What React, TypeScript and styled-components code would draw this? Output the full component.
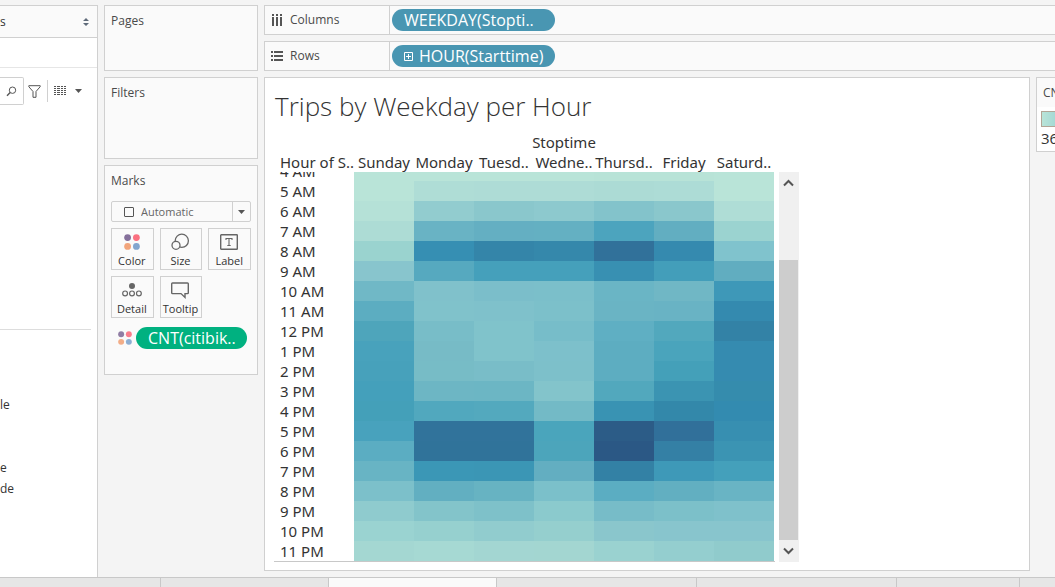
import React from "react";
import styled, { createGlobalStyle } from "styled-components";

const line = "#d0d0d0";
const uiFont = `"Open Sans", "Noto Sans", sans-serif`;
const chartFont = `"Noto Sans", "Open Sans", sans-serif`;

const GlobalStyle = createGlobalStyle`
  *, *::before, *::after { box-sizing: border-box; }
  body {
    margin: 0;
    background: #f4f4f4;
    color: #4a4a4a;
    font: 12px/16px ${uiFont};
  }
  button, input, select { font: inherit; color: inherit; }
`;

const Shell = styled.div`
  display: flex;
  flex-direction: column;
  height: 100vh;
  min-height: 400px;
  overflow: hidden;
`;

const Workspace = styled.main`
  flex: 1;
  min-height: 0;
  display: flex;
  gap: 6px;
  padding-top: 5px;
`;

/* ---- Data pane ---- */

const DataPane = styled.aside`
  flex: 0 0 98px;
  background: #fff;
  border-top: 1px solid ${line};
  border-right: 1px solid ${line};
`;

const SourceButton = styled.button`
  display: flex;
  align-items: center;
  justify-content: space-between;
  width: 100%;
  height: 32px;
  padding: 0 8px 0 0;
  border: 0;
  border-bottom: 1px solid ${line};
  background: #fafafa;
  color: #333;
`;

const SourceList = styled.div`
  height: 30px;
  border-bottom: 1px solid #e6e6e6;
`;

const SearchBar = styled.div`
  display: flex;
  align-items: center;
  height: 46px;
`;

const SearchBox = styled.label`
  display: flex;
  align-items: center;
  width: 24px;
  height: 28px;
  border: 1px solid ${line};
  border-left: 0;
  border-radius: 0 2px 2px 0;
`;

const SearchInput = styled.input`
  width: 6px;
  padding: 0;
  border: 0;
  background: none;
  outline: none;
`;

const IconButton = styled.button<{ $width: number }>`
  display: flex;
  align-items: center;
  justify-content: center;
  width: ${(p) => p.$width}px;
  height: 22px;
  padding: 0;
  border: 0;
  background: none;
`;

const ViewGroup = styled.div`
  display: flex;
  margin-left: 2px;
  border-left: 1px solid ${line};
`;

const Tables = styled.div`
  height: 216px;
  margin-right: 6px;
  border-bottom: 1px solid #ddd;
`;

const FieldList = styled.ul`
  margin: 0;
  padding: 64px 0 0;
  list-style: none;
  color: #333;
`;

const Field = styled.li`
  height: 21px;
  line-height: 21px;
`;

/* ---- Cards ---- */

const CardColumn = styled.div`
  flex: 0 0 154px;
  display: flex;
  flex-direction: column;
  gap: 6px;
`;

const Card = styled.section<{ $height: number }>`
  min-height: ${(p) => p.$height}px;
  padding: 7px 6px;
  border: 1px solid ${line};
  background: #fafafa;
`;

const CardTitle = styled.h2`
  margin: 0;
  font-size: 12px;
  font-weight: 400;
  line-height: 16px;
`;

const MarkType = styled.label`
  display: flex;
  align-items: center;
  height: 21px;
  margin: 12px 0 6px;
  padding-left: 12px;
  border: 1px solid ${line};
  border-radius: 2px;
  color: #666;
`;

const MarkSelect = styled.select`
  flex: 1;
  min-width: 0;
  height: 18px;
  padding: 0 0 0 7px;
  border: 0;
  background: none;
  appearance: none;
  font-size: 11px;
`;

const MarkArrow = styled.span`
  display: flex;
  align-items: center;
  justify-content: center;
  width: 18px;
  height: 19px;
  border-left: 1px solid ${line};
`;

const MarkGrid = styled.div`
  display: grid;
  grid-template-columns: repeat(3, 1fr);
  gap: 6px;
`;

const MarkButton = styled.button`
  display: flex;
  flex-direction: column;
  align-items: center;
  justify-content: space-between;
  height: 42px;
  padding: 3px 1px 0 0;
  border: 1px solid ${line};
  background: #fafafa;
  color: #333;
  font-size: 11px;
  line-height: 16px;
`;

const Encoding = styled.div`
  display: flex;
  align-items: center;
  gap: 4px;
  padding: 9px 4px 0 7px;
`;

const Pill = styled.button<{ $color: string }>`
  display: flex;
  align-items: center;
  gap: 6px;
  height: 22px;
  padding: 0 11px 0 12px;
  border: 0;
  border-radius: 11px;
  background: ${(p) => p.$color};
  color: #fff;
  font: 500 16px/22px ${uiFont};
  white-space: nowrap;
`;

const EncodingPill = styled(Pill)`
  flex: 1;
`;

const ShelfPill = styled(Pill)`
  width: 163px;
`;

/* ---- Shelves and sheet ---- */

const Canvas = styled.div`
  flex: 1;
  min-width: 0;
  display: flex;
  flex-direction: column;
  gap: 6px;
`;

const Shelf = styled.section`
  flex: none;
  display: flex;
  align-items: center;
  height: 30px;
  border: 1px solid ${line};
  border-right: 0;
  background: #fafafa;
`;

const ShelfLabel = styled.h2`
  display: flex;
  align-items: center;
  gap: 6px;
  width: 125px;
  height: 28px;
  margin: 0 2px 0 0;
  padding-left: 5px;
  border-right: 1px solid ${line};
  font-size: 12px;
  font-weight: 400;
`;

const SheetRow = styled.div`
  flex: 1;
  min-height: 0;
  display: flex;
  gap: 6px;
  padding-bottom: 6px;
`;

const Sheet = styled.section`
  flex: 1;
  min-width: 0;
  display: flex;
  flex-direction: column;
  padding: 10px 9px 8px;
  border: 1px solid ${line};
  background: #fff;
`;

const SheetTitle = styled.h1`
  margin: 0;
  padding-left: 1px;
  color: #333;
  font: 300 26px/36px ${uiFont};
`;

const Viz = styled.div`
  flex: 1;
  min-height: 0;
  display: flex;
  gap: 4px;
  padding-top: 8px;
`;

const HeatTable = styled.table`
  display: flex;
  flex-direction: column;
  flex: 0 0 501px;
  min-height: 0;
  border-bottom: 1px solid #c8c8c8;
  color: #333;
  font: 15px/20px ${chartFont};
`;

const HeatHead = styled.thead`
  display: block;
`;

const HeatBody = styled.tbody`
  flex: 1;
  min-height: 0;
  display: flex;
  flex-direction: column;
  justify-content: flex-end;
  overflow: hidden;
`;

const HeatRow = styled.tr`
  flex: none;
  display: grid;
  grid-template-columns: 80px repeat(7, 60px);
  height: 20px;
`;

const Spanner = styled.th`
  grid-column: 2 / -1;
  padding: 0;
  font-weight: 400;
`;

const DayHead = styled.th`
  padding: 0;
  font-weight: 400;
  white-space: nowrap;
  text-align: center;
`;

const HourHead = styled.th`
  padding: 0 0 0 6px;
  font-weight: 400;
  white-space: nowrap;
  text-align: left;
`;

const Cell = styled.td<{ $color: string }>`
  padding: 0;
  background: ${(p) => p.$color};
`;

const ScrollBar = styled.div`
  display: flex;
  flex-direction: column;
  width: 20px;
  margin-top: 40px;
  background: #f0f0f0;
`;

const Track = styled.div`
  flex: 1;
  display: flex;
  flex-direction: column;
  justify-content: flex-end;
`;

const Thumb = styled.div`
  width: 19px;
  height: 81%;
  background: #cdcdcd;
`;

const LegendColumn = styled.aside`
  flex: 0 0 19px;
  overflow: hidden;
`;

const Legend = styled.section`
  width: 154px;
  height: 75px;
  border: 1px solid ${line};
  background: #fff;
`;

const LegendTitle = styled.h2`
  margin: 0;
  padding: 0 6px;
  background: #fafafa;
  font-size: 12px;
  font-weight: 400;
  line-height: 29px;
`;

const Ramp = styled.div`
  height: 16px;
  margin: 4px 4px 0;
  border: 1px solid #b3a596;
  background: linear-gradient(90deg, #b9e4d8, #8ccbd0 30px, #45a1bb 80px, #2c5985);
`;

const LegendValue = styled.div`
  padding: 0 4px;
  color: #333;
  font: 15px/22px ${uiFont};
`;

/* ---- Sheet tabs ---- */

const TabStrip = styled.nav`
  flex: none;
  display: flex;
  height: 10px;
  border-top: 1px solid #c8c8c8;
  background: #e6e6e6;
`;

const Tab = styled.button<{ $width: number; $active?: boolean }>`
  flex: 0 1 ${(p) => p.$width}px;
  padding: 0;
  border: 0;
  border-right: 1px solid #c8c8c8;
  background: ${(p) => (p.$active ? "#fafafa" : "#e6e6e6")};
`;

/* ---- Icons ---- */

const SortIcon = () => (
  <svg width="6" height="8" viewBox="0 0 6 8" fill="#5f6b7a">
    <path d="M3 0 6 3H0zM3 8 0 5h6z" />
  </svg>
);

const SearchIcon = () => (
  <svg width="11" height="11" viewBox="0 0 11 11" fill="none" stroke="#555">
    <circle cx="6.5" cy="4.2" r="3.2" />
    <path d="M4.2 6.6 1 9.8" strokeWidth="1.4" />
  </svg>
);

const FilterIcon = () => (
  <svg width="13" height="13" viewBox="0 0 13 13" fill="none" stroke="#555">
    <path d="M.8.7h11.4v1L8 6.5v5.8H5V6.5L.8 1.7z" />
  </svg>
);

const GridIcon = () => (
  <svg width="12" height="10" viewBox="0 0 12 10" stroke="#555" strokeDasharray="2 1 3 1 2 1 2">
    <path d="M0 .5h12M0 2.5h12M0 4.5h12M0 6.5h12M0 8.5h12" />
  </svg>
);

const CaretIcon = () => (
  <svg width="7" height="4" viewBox="0 0 7 4" fill="#555">
    <path d="M0 0h7L3.5 4z" />
  </svg>
);

const SquareIcon = () => (
  <svg width="10" height="10" viewBox="0 0 10 10" fill="none" stroke="#555">
    <rect x=".5" y=".5" width="9" height="9" rx=".5" />
  </svg>
);

const Dots = () => (
  <>
    <circle cx="3.6" cy="3.6" r="3.4" fill="#85709b" />
    <circle cx="12.4" cy="3.6" r="3.4" fill="#fa7080" />
    <circle cx="3.6" cy="12.4" r="3.4" fill="#f2a57c" />
    <circle cx="12.4" cy="12.4" r="3.4" fill="#82a6cf" />
  </>
);

const ColorIcon = () => (
  <svg width="16" height="20" viewBox="0 -2 16 20">
    <Dots />
  </svg>
);

const EncodingIcon = () => (
  <svg width="14" height="14" viewBox="0 0 16 16" opacity=".9">
    <Dots />
  </svg>
);

const SizeIcon = () => (
  <svg width="20" height="20" viewBox="0 0 20 20" fill="none" stroke="#666" strokeWidth="1.3">
    <circle cx="11.8" cy="8.8" r="6.6" />
    <circle cx="6" cy="13.3" r="4" fill="#fafafa" />
  </svg>
);

const LabelIcon = () => (
  <svg width="18" height="20" viewBox="0 0 18 20" fill="none" stroke="#666">
    <rect x=".7" y="2.7" width="16.6" height="14.6" rx=".6" strokeWidth="1.4" />
    <path d="M6 8V6.5h6V8M9 6.5v7M7.3 13.5h3.4" strokeWidth="1.1" />
  </svg>
);

const DetailIcon = () => (
  <svg width="20" height="20" viewBox="0 0 20 20" fill="none" stroke="#666" strokeWidth="1.2">
    <circle cx="10" cy="6" r="3" fill="#666" stroke="none" />
    <circle cx="3.1" cy="13.4" r="2.4" />
    <circle cx="10" cy="13.4" r="2.4" />
    <circle cx="16.9" cy="13.4" r="2.4" />
  </svg>
);

const TooltipIcon = () => (
  <svg width="18" height="20" viewBox="0 0 18 20" fill="none" stroke="#666" strokeWidth="1.4">
    <path d="M1.5 3h15q.8 0 .8.8v9q0 .8-.8.8H14v3.8l-4-3.8H1.5q-.8 0-.8-.8v-9q0-.8.8-.8z" />
  </svg>
);

const ColumnsIcon = () => (
  <svg width="14" height="12" viewBox="0 0 14 12" fill="#555">
    <path d="M2 0h2v2H2zM6 0h2v2H6zM10 0h2v2h-2zM2 3h2v9H2zM6 3h2v9H6zM10 3h2v9h-2z" />
  </svg>
);

const RowsIcon = () => (
  <svg width="14" height="12" viewBox="0 0 14 12" fill="#555">
    <path d="M1 1h2v2H1zM1 5h2v2H1zM1 9h2v2H1zM4 1h9v2H4zM4 5h9v2H4zM4 9h9v2H4z" />
  </svg>
);

const PlusBoxIcon = () => (
  <svg width="9" height="9" viewBox="0 0 9 9" fill="none" stroke="#fff">
    <path d="M.5.5h8v8h-8zM4.5 2v5M2 4.5h5" />
  </svg>
);

const ChevronIcon = ({ down }: { down?: boolean }) => (
  <svg width="11" height="8" viewBox="0 0 11 8" fill="none" stroke="#555" strokeWidth="2">
    <path d={down ? "M1 1.5 5.5 6 10 1.5" : "M1 6.5 5.5 2 10 6.5"} />
  </svg>
);

/* ---- Data ---- */

const days = ["Sunday", "Monday", "Tuesd..", "Wedne..", "Thursd..", "Friday", "Saturd.."];

const hours: [string, string][] = [
  ["4 AM", "b9e4d8 b9e4d8 b9e4d8 b9e4d8 b8e3d7 b8e3d7 b9e4d8"],
  ["5 AM", "b9e4d8 afddd6 aedcd6 aedcd6 acdbd5 addcd6 b9e4d8"],
  ["6 AM", "b5e1d7 92cccf 8ac7cc 8dc9ce 83c3cb 8ac7cc afddd6"],
  ["7 AM", "addcd5 69b3c4 64afc2 64b0c2 4ca4be 62aec1 9bd3d0"],
  ["8 AM", "9ad3cf 368fb3 3485a9 3588ab 31719a 358aaf 80c3cd"],
  ["9 AM", "88c5cd 56a9bf 45a0bb 45a0bb 3890b2 439eba 61adc0"],
  ["10 AM", "70b8c6 80c1cb 7bbeca 7bbfca 6ab5c5 70b7c5 3e98b8"],
  ["11 AM", "5cadc1 80c2cb 7fc1cb 7cc0ca 6ab4c4 69b3c4 348aaf"],
  ["12 PM", "4ea5bb 78bdc8 80c3cb 77bdc9 5fafc3 52a8bd 3382a6"],
  ["1 PM", "48a2bc 77bbc6 80c3cb 7dc0cb 5dadc1 4aa4bc 358bb0"],
  ["2 PM", "47a1bb 77bcc6 79bdc8 7dc0ca 5dadc1 44a0b9 358bb0"],
  ["3 PM", "44a0bb 6db6c4 6cb6c4 83c4cb 52a8bd 3b94b2 358cad"],
  ["4 PM", "44a0b9 51a8be 53a9be 73bac6 3993b3 3388aa 338bb0"],
  ["5 PM", "48a2bd 31739b 31739b 4aa5bc 2c5c87 31709a 378fb1"],
  ["6 PM", "5badc2 30739a 30739a 4ca5bb 2b5885 3480a5 3b94b3"],
  ["7 PM", "68b4c4 3b97b6 3b96b5 63aec1 3381a5 3e99b8 44a0bb"],
  ["8 PM", "7cc0ca 62afc1 67b3c2 7bc0ca 5badc2 62afc1 69b4c4"],
  ["9 PM", "8fcbce 83c4ca 7ec1c9 8bcacd 77bcc8 7cc0c9 7fc1cb"],
  ["10 PM", "9ad3d1 96d0cf 91ccce 95cfce 8ac6cc 88c5cd 88c5cd"],
  ["11 PM", "a4d7d2 a6d9d3 a3d6d2 a3d6d1 9ad2d0 94cecf 90cbcc"],
];

const marks = [
  { name: "Color", icon: <ColorIcon /> },
  { name: "Size", icon: <SizeIcon /> },
  { name: "Label", icon: <LabelIcon /> },
  { name: "Detail", icon: <DetailIcon /> },
  { name: "Tooltip", icon: <TooltipIcon /> },
];

const fields = ["le", "", "", "e", "de"];

export default function App() {
  return (
    <>
      <GlobalStyle />
      <Shell>
        <Workspace>
          <DataPane>
            <SourceButton>
              s
              <SortIcon />
            </SourceButton>
            <SourceList />
            <SearchBar>
              <SearchBox>
                <SearchInput aria-label="Search" />
                <SearchIcon />
              </SearchBox>
              <IconButton $width={21} aria-label="Filter">
                <FilterIcon />
              </IconButton>
              <ViewGroup>
                <IconButton $width={24} aria-label="View">
                  <GridIcon />
                </IconButton>
                <IconButton $width={12} aria-label="Options">
                  <CaretIcon />
                </IconButton>
              </ViewGroup>
            </SearchBar>
            <Tables />
            <FieldList>
              {fields.map((name, i) => (
                <Field key={i}>{name}</Field>
              ))}
            </FieldList>
          </DataPane>

          <CardColumn>
            <Card $height={66}>
              <CardTitle>Pages</CardTitle>
            </Card>
            <Card $height={82}>
              <CardTitle>Filters</CardTitle>
            </Card>
            <Card $height={210}>
              <CardTitle>Marks</CardTitle>
              <MarkType>
                <SquareIcon />
                <MarkSelect aria-label="Mark type">
                  <option>Automatic</option>
                </MarkSelect>
                <MarkArrow>
                  <CaretIcon />
                </MarkArrow>
              </MarkType>
              <MarkGrid>
                {marks.map((m) => (
                  <MarkButton key={m.name}>
                    {m.icon}
                    {m.name}
                  </MarkButton>
                ))}
              </MarkGrid>
              <Encoding>
                <EncodingIcon />
                <EncodingPill $color="#00b180">CNT(citibik..</EncodingPill>
              </Encoding>
            </Card>
          </CardColumn>

          <Canvas>
            <Shelf>
              <ShelfLabel>
                <ColumnsIcon />
                Columns
              </ShelfLabel>
              <ShelfPill $color="#4996b2">WEEKDAY(Stopti..</ShelfPill>
            </Shelf>
            <Shelf>
              <ShelfLabel>
                <RowsIcon />
                Rows
              </ShelfLabel>
              <ShelfPill $color="#4996b2">
                <PlusBoxIcon />
                HOUR(Starttime)
              </ShelfPill>
            </Shelf>
            <SheetRow>
              <Sheet>
                <SheetTitle>Trips by Weekday per Hour</SheetTitle>
                <Viz>
                  <HeatTable>
                    <HeatHead>
                      <HeatRow>
                        <Spanner scope="colgroup">Stoptime</Spanner>
                      </HeatRow>
                      <HeatRow>
                        <HourHead scope="col">Hour of S..</HourHead>
                        {days.map((d) => (
                          <DayHead key={d} scope="col">
                            {d}
                          </DayHead>
                        ))}
                      </HeatRow>
                    </HeatHead>
                    <HeatBody>
                      {hours.map(([hour, colors]) => (
                        <HeatRow key={hour}>
                          <HourHead scope="row">{hour}</HourHead>
                          {colors.split(" ").map((c, i) => (
                            <Cell key={i} $color={`#${c}`} />
                          ))}
                        </HeatRow>
                      ))}
                    </HeatBody>
                  </HeatTable>
                  <ScrollBar>
                    <IconButton $width={19} aria-label="Scroll up">
                      <ChevronIcon />
                    </IconButton>
                    <Track>
                      <Thumb />
                    </Track>
                    <IconButton $width={19} aria-label="Scroll down">
                      <ChevronIcon down />
                    </IconButton>
                  </ScrollBar>
                </Viz>
              </Sheet>
              <LegendColumn>
                <Legend>
                  <LegendTitle>CN</LegendTitle>
                  <Ramp />
                  <LegendValue>36</LegendValue>
                </Legend>
              </LegendColumn>
            </SheetRow>
          </Canvas>
        </Workspace>
        <TabStrip aria-label="Sheets">
          <Tab $width={161} aria-label="Sheet" />
          <Tab $width={168} aria-label="Sheet" />
          <Tab $width={168} $active aria-label="Current sheet" />
          <Tab $width={200} aria-label="Sheet" />
          <Tab $width={200} aria-label="Sheet" />
          <Tab $width={123} aria-label="Sheet" />
        </TabStrip>
      </Shell>
    </>
  );
}
